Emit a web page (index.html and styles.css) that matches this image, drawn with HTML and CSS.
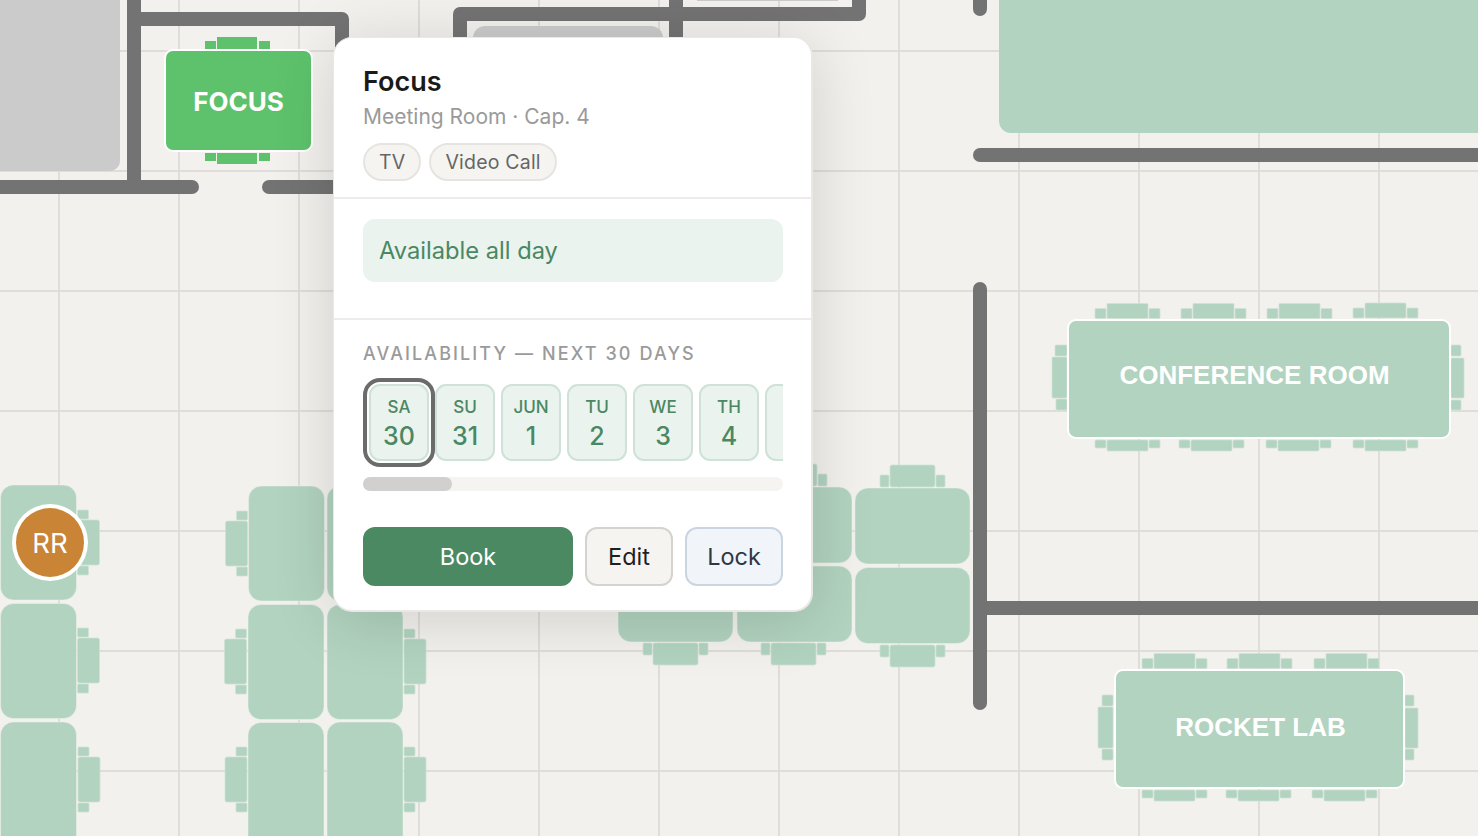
FILE: index.html
```html
<!DOCTYPE html>
<html lang="en">
<head>
    <meta charset="UTF-8">
    <meta name="viewport" content="width=device-width, initial-scale=1.0">
    <title>Floor plan</title>
    <link rel="stylesheet" href="styles.css">
</head>
<body>
    <div class="stage">
        <svg class="plan" width="1478" height="836" viewBox="0 0 1478 836">
            <defs>
                <g id="chairs-up">
                    <rect class="chair" x="12" y="-15" width="41" height="15" rx="1"/>
                    <rect class="chair" x="0" y="-10" width="11" height="10" rx="1"/>
                    <rect class="chair" x="54" y="-10" width="11" height="10" rx="1"/>
                </g>
                <g id="chairs-down">
                    <rect class="chair" x="12" y="0" width="41" height="11" rx="1"/>
                    <rect class="chair" x="0" y="0" width="11" height="8" rx="1"/>
                    <rect class="chair" x="54" y="0" width="11" height="8" rx="1"/>
                </g>
                <g id="desk-right">
                    <rect class="chair" x="0" y="10" width="22" height="45" rx="2"/>
                    <rect class="chair" x="0" y="0" width="11" height="9" rx="1"/>
                    <rect class="chair" x="0" y="56" width="11" height="9" rx="1"/>
                </g>
                <g id="desk-left">
                    <rect class="chair" x="-22" y="10" width="22" height="45" rx="2"/>
                    <rect class="chair" x="-11" y="0" width="11" height="9" rx="1"/>
                    <rect class="chair" x="-11" y="56" width="11" height="9" rx="1"/>
                </g>
                <g id="desk-up">
                    <rect class="chair" x="10" y="-22" width="45" height="22" rx="2"/>
                    <rect class="chair" x="0" y="-12" width="9" height="12" rx="1"/>
                    <rect class="chair" x="56" y="-12" width="9" height="12" rx="1"/>
                </g>
                <g id="desk-down">
                    <rect class="chair" x="10" y="0" width="45" height="22" rx="2"/>
                    <rect class="chair" x="0" y="0" width="9" height="12" rx="1"/>
                    <rect class="chair" x="56" y="0" width="9" height="12" rx="1"/>
                </g>
            </defs>

            <!-- blocked rooms -->
            <rect class="blocked" x="-20" y="-20" width="140" height="191" rx="10"/>
            <rect class="blocked" x="473" y="26" width="190" height="60" rx="12"/>
            <rect class="blocked" x="697" y="-10" width="141" height="11"/>
            <rect class="room" x="999" y="-20" width="520" height="153" rx="12"/>

            <!-- walls -->
            <path class="wall" d="M134 -10 V187 M-10 187 H192 M134 19 H342 V80 M269 187 H350"/>
            <path class="wall" d="M460 80 V14 H859 V-10 M676 -10 V60"/>
            <path class="wall" d="M980 -10 V9 M980 155 H1500 M980 289 V703 M987 608 H1500"/>

            <!-- focus room -->
            <rect class="chair-focus" x="217" y="37" width="40" height="12"/>
            <rect class="chair-focus" x="205" y="41" width="11" height="8"/>
            <rect class="chair-focus" x="259" y="41" width="11" height="8"/>
            <rect class="chair-focus" x="217" y="153" width="40" height="11"/>
            <rect class="chair-focus" x="205" y="153" width="11" height="8"/>
            <rect class="chair-focus" x="259" y="153" width="11" height="8"/>
            <rect class="table-focus" x="165" y="50" width="147" height="101" rx="8"/>
            <text class="label-focus" x="238.5" y="110.5">FOCUS</text>

            <!-- desks left -->
            <rect class="desk" x="0.5" y="485" width="76" height="115" rx="13"/>
            <rect class="desk" x="0.5" y="603.5" width="76" height="115" rx="13"/>
            <rect class="desk" x="0.5" y="722" width="76" height="130" rx="13"/>
            <use href="#desk-right" x="77.5" y="510"/>
            <use href="#desk-right" x="77.5" y="628"/>
            <use href="#desk-right" x="78" y="747"/>

            <rect class="desk" x="248.5" y="486" width="76" height="115" rx="13"/>
            <rect class="desk" x="327" y="486" width="76" height="115" rx="13"/>
            <rect class="desk" x="248" y="604.5" width="76" height="115" rx="13"/>
            <rect class="desk" x="327" y="604.5" width="76" height="115" rx="13"/>
            <rect class="desk" x="248" y="722.5" width="76" height="130" rx="13"/>
            <rect class="desk" x="327" y="722" width="76" height="130" rx="13"/>
            <use href="#desk-left" x="247.5" y="511"/>
            <use href="#desk-left" x="246.5" y="629"/>
            <use href="#desk-left" x="247" y="747"/>
            <use href="#desk-right" x="404" y="629"/>
            <use href="#desk-right" x="404" y="747"/>

            <!-- desks middle -->
            <rect class="desk" x="618" y="487" width="115" height="155" rx="13"/>
            <rect class="desk" x="737" y="487" width="115" height="76" rx="13"/>
            <rect class="desk" x="737" y="566" width="115" height="76" rx="13"/>
            <rect class="desk" x="855" y="488" width="115" height="76" rx="13"/>
            <rect class="desk" x="855" y="567.5" width="115" height="76" rx="13"/>
            <use href="#desk-up" x="762" y="486"/>
            <use href="#desk-up" x="880" y="487"/>
            <use href="#desk-down" x="643" y="643"/>
            <use href="#desk-down" x="761" y="643"/>
            <use href="#desk-down" x="880" y="645"/>

            <!-- conference room -->
            <use href="#chairs-up" x="1095" y="318.5"/>
            <use href="#chairs-up" x="1181" y="318.5"/>
            <use href="#chairs-up" x="1267" y="318.5"/>
            <use href="#chairs-up" x="1353" y="318"/>
            <use href="#chairs-down" x="1095" y="440"/>
            <use href="#chairs-down" x="1179" y="440"/>
            <use href="#chairs-down" x="1266" y="440"/>
            <use href="#chairs-down" x="1353" y="440"/>
            <rect class="chair" x="1052" y="357" width="15" height="41" rx="1"/>
            <rect class="chair" x="1055" y="345" width="12" height="11" rx="1"/>
            <rect class="chair" x="1056" y="399" width="11" height="11" rx="1"/>
            <rect class="chair" x="1451" y="358" width="13" height="40" rx="1"/>
            <rect class="chair" x="1451" y="345" width="10" height="11" rx="1"/>
            <rect class="chair" x="1451" y="400" width="10" height="10" rx="1"/>
            <rect class="table" x="1068" y="320" width="382" height="118" rx="8"/>
            <text class="label" x="1254.5" y="384">CONFERENCE ROOM</text>

            <!-- rocket lab -->
            <use href="#chairs-up" x="1142" y="668.5"/>
            <use href="#chairs-up" x="1227" y="668.5"/>
            <use href="#chairs-up" x="1314" y="668.5"/>
            <use href="#chairs-down" x="1142" y="790"/>
            <use href="#chairs-down" x="1226" y="790"/>
            <use href="#chairs-down" x="1312" y="790"/>
            <rect class="chair" x="1098" y="707" width="15" height="41" rx="1"/>
            <rect class="chair" x="1102" y="695" width="11" height="11" rx="1"/>
            <rect class="chair" x="1102" y="749" width="11" height="11" rx="1"/>
            <rect class="chair" x="1405" y="708" width="13" height="40" rx="1"/>
            <rect class="chair" x="1405" y="695" width="9" height="11" rx="1"/>
            <rect class="chair" x="1405" y="749" width="9" height="11" rx="1"/>
            <rect class="table" x="1115" y="670" width="289" height="118" rx="8"/>
            <text class="label" x="1260.5" y="736">ROCKET LAB</text>
        </svg>

        <div class="avatar">RR</div>

        <div class="card">
            <div class="card-head">
                <h1>Focus</h1>
                <p class="sub">Meeting Room · Cap. 4</p>
                <div class="tags">
                    <span class="tag">TV</span>
                    <span class="tag">Video Call</span>
                </div>
            </div>

            <div class="card-status">
                <div class="status-box">Available all day</div>
            </div>

            <div class="card-days">
                <div class="days-title">AVAILABILITY — NEXT 30 DAYS</div>
                <div class="days">
                    <div class="day selected"><span class="dow">SA</span><span class="num">30</span></div>
                    <div class="day"><span class="dow">SU</span><span class="num">31</span></div>
                    <div class="day"><span class="dow">JUN</span><span class="num">1</span></div>
                    <div class="day"><span class="dow">TU</span><span class="num">2</span></div>
                    <div class="day"><span class="dow">WE</span><span class="num">3</span></div>
                    <div class="day"><span class="dow">TH</span><span class="num">4</span></div>
                    <div class="day"></div>
                </div>
                <div class="scroll"><div class="scroll-thumb"></div></div>
                <div class="actions">
                    <button class="btn btn-book">Book</button>
                    <button class="btn btn-edit">Edit</button>
                    <button class="btn btn-lock">Lock</button>
                </div>
            </div>
        </div>
    </div>
</body>
</html>
```

FILE: styles.css
```css
* {
    box-sizing: border-box;
}
body {
    margin: 0;
    font-family: 'Inter', 'Noto Sans', sans-serif;
    overflow: hidden;
}
.stage {
    position: relative;
    width: 1478px;
    height: 836px;
    overflow: hidden;
    background-color: #f2f1ed;
    background-image:
        linear-gradient(to right, #dfddd9 2px, transparent 2px),
        linear-gradient(to bottom, #dfddd9 2px, transparent 2px);
    background-size: 120px 120px;
    background-position: 58px 50px;
}
.plan {
    display: block;
}
.wall {
    fill: none;
    stroke: #737373;
    stroke-width: 14;
    stroke-linecap: round;
    stroke-linejoin: round;
}
.blocked {
    fill: #cbcbcb;
}
.room {
    fill: #b1d3bf;
}
.desk {
    fill: #b1d3bf;
    stroke: #f2f1ed;
    stroke-width: 0.5;
}
.chair {
    fill: #b1d3bf;
    stroke: #cfe2d6;
    stroke-width: 0.75;
}
.table {
    fill: #b1d3bf;
    stroke: #ffffff;
    stroke-width: 2;
}
.table-focus {
    fill: #5dc26b;
    stroke: #ffffff;
    stroke-width: 2;
}
.chair-focus {
    fill: #5dc26b;
}
.label {
    fill: #ffffff;
    font-family: 'Liberation Sans', Arial, sans-serif;
    font-weight: 700;
    font-size: 26px;
    text-anchor: middle;
}
.label-focus {
    fill: #ffffff;
    font-family: 'Inter', sans-serif;
    font-weight: 700;
    font-size: 26px;
    text-anchor: middle;
}
.avatar {
    position: absolute;
    left: 12px;
    top: 504px;
    width: 76px;
    height: 77px;
    border-radius: 50%;
    border: 4px solid #ffffff;
    background-color: #c98435;
    color: #ffffff;
    font-size: 27.5px;
    display: flex;
    align-items: center;
    justify-content: center;
}
.card {
    position: absolute;
    left: 333px;
    top: 37px;
    width: 480px;
    height: 575px;
    background-color: #ffffff;
    border-style: solid;
    border-color: #e9e8e4;
    border-width: 1px 2px 2px 1px;
    border-radius: 19px;
    box-shadow: 0 8px 64px rgba(0, 0, 0, 0.14);
    overflow: hidden;
}
.card-head {
    height: 161px;
    padding: 27px 28px 0 29px;
    border-bottom: 2px solid #edecea;
}
h1 {
    margin: 0;
    font-size: 27px;
    line-height: 34px;
    font-weight: 600;
    color: #1a1a1a;
}
.sub {
    margin: 3px 0 0;
    font-size: 21px;
    line-height: 30px;
    color: #9a9a9a;
}
.tags {
    display: flex;
    gap: 8px;
    margin-top: 11px;
}
.tag {
    height: 38px;
    padding: 0 14px;
    border: 2px solid #e6e4e0;
    border-radius: 19px;
    background-color: #f5f4f0;
    color: #666666;
    font-size: 19.5px;
    letter-spacing: 0.2px;
    line-height: 34px;
}
.card-status {
    height: 121px;
    padding: 20px 28px 0 29px;
    border-bottom: 2px solid #edecea;
}
.status-box {
    height: 63px;
    padding: 0 16px;
    border-radius: 12px;
    background-color: #eaf3ee;
    color: #4a8763;
    font-size: 23.7px;
    line-height: 64px;
}
.card-days {
    padding: 22px 28px 0 29px;
}
.days-title {
    font-size: 18px;
    line-height: 24px;
    font-weight: 500;
    letter-spacing: 2.1px;
    color: #9a9a9a;
}
.days {
    display: flex;
    gap: 6px;
    margin-top: 12px;
    padding: 6px 0 6px 6px;
    overflow: hidden;
}
.day {
    flex: 0 0 60px;
    height: 77px;
    border: 2px solid #cfe2d7;
    border-radius: 11px;
    background-color: #eaf3ee;
    color: #4a8763;
    display: flex;
    flex-direction: column;
    align-items: center;
    padding-top: 9px;
}
.day.selected {
    outline: 4px solid #6b6b6b;
    outline-offset: 2px;
}
.dow {
    font-size: 17px;
    line-height: 24px;
    font-weight: 500;
}
.num {
    font-size: 25px;
    line-height: 34px;
    font-weight: 500;
}
.scroll {
    height: 14px;
    margin-top: 10px;
    border-radius: 7px;
    background-color: #f5f4f0;
}
.scroll-thumb {
    width: 89px;
    height: 14px;
    border-radius: 7px;
    background-color: #d1d0ce;
}
.actions {
    display: flex;
    gap: 12px;
    margin-top: 36px;
}
.btn {
    height: 59px;
    border-radius: 12px;
    font-family: inherit;
    font-size: 23.5px;
    padding: 0;
}
.btn-book {
    width: 210px;
    border: none;
    background-color: #4b8963;
    color: #ffffff;
}
.btn-edit {
    width: 88px;
    border: 2px solid #d5d3d0;
    background-color: #f5f4f1;
    color: #1f1f1f;
}
.btn-lock {
    width: 98px;
    border: 2px solid #cbd5e1;
    background-color: #f1f4f9;
    color: #2f3747;
}
```
